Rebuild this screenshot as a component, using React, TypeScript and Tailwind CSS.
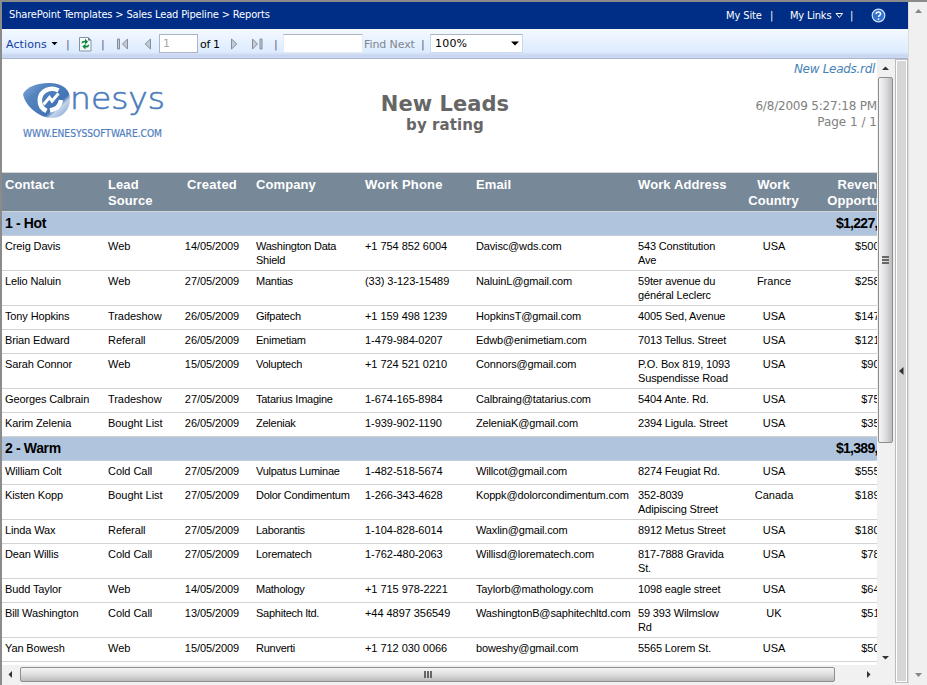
import React from 'react';

interface Lead {
  contact: string;
  source: string;
  created: string;
  company: string[];
  phone: string;
  email: string;
  address: string[];
  country: string;
  revenue: string;
}

interface LeadGroup {
  title: string;
  total: string;
  leads: Lead[];
}

const groups: LeadGroup[] = [
  {
    title: '1 - Hot',
    total: '$1,227,000',
    leads: [
      { contact: 'Creig Davis', source: 'Web', created: '14/05/2009', company: ['Washington Data', 'Shield'], phone: '+1 754 852 6004', email: 'Davisc@wds.com', address: ['543 Constitution', 'Ave'], country: 'USA', revenue: '$500,000' },
      { contact: 'Lelio Naluin', source: 'Web', created: '27/05/2009', company: ['Mantias'], phone: '(33) 3-123-15489', email: 'NaluinL@gmail.com', address: ['59ter avenue du', 'général Leclerc'], country: 'France', revenue: '$258,000' },
      { contact: 'Tony Hopkins', source: 'Tradeshow', created: '26/05/2009', company: ['Gifpatech'], phone: '+1 159 498 1239', email: 'HopkinsT@gmail.com', address: ['4005 Sed, Avenue'], country: 'USA', revenue: '$147,000' },
      { contact: 'Brian Edward', source: 'Referall', created: '26/05/2009', company: ['Enimetiam'], phone: '1-479-984-0207', email: 'Edwb@enimetiam.com', address: ['7013 Tellus. Street'], country: 'USA', revenue: '$121,000' },
      { contact: 'Sarah Connor', source: 'Web', created: '15/05/2009', company: ['Voluptech'], phone: '+1 724 521 0210', email: 'Connors@gmail.com', address: ['P.O. Box 819, 1093', 'Suspendisse Road'], country: 'USA', revenue: '$90,000' },
      { contact: 'Georges Calbrain', source: 'Tradeshow', created: '27/05/2009', company: ['Tatarius Imagine'], phone: '1-674-165-8984', email: 'Calbraing@tatarius.com', address: ['5404 Ante. Rd.'], country: 'USA', revenue: '$75,000' },
      { contact: 'Karim Zelenia', source: 'Bought List', created: '26/05/2009', company: ['Zeleniak'], phone: '1-939-902-1190', email: 'ZeleniaK@gmail.com', address: ['2394 Ligula. Street'], country: 'USA', revenue: '$35,000' },
    ],
  },
  {
    title: '2 - Warm',
    total: '$1,389,000',
    leads: [
      { contact: 'William Colt', source: 'Cold Call', created: '27/05/2009', company: ['Vulpatus Luminae'], phone: '1-482-518-5674', email: 'Willcot@gmail.com', address: ['8274 Feugiat Rd.'], country: 'USA', revenue: '$555,000' },
      { contact: 'Kisten Kopp', source: 'Bought List', created: '27/05/2009', company: ['Dolor Condimentum'], phone: '1-266-343-4628', email: 'Koppk@dolorcondimentum.com', address: ['352-8039', 'Adipiscing Street'], country: 'Canada', revenue: '$189,000' },
      { contact: 'Linda Wax', source: 'Referall', created: '27/05/2009', company: ['Laborantis'], phone: '1-104-828-6014', email: 'Waxlin@gmail.com', address: ['8912 Metus Street'], country: 'USA', revenue: '$180,000' },
      { contact: 'Dean Willis', source: 'Cold Call', created: '27/05/2009', company: ['Lorematech'], phone: '1-762-480-2063', email: 'Willisd@lorematech.com', address: ['817-7888 Gravida', 'St.'], country: 'USA', revenue: '$78,000' },
      { contact: 'Budd Taylor', source: 'Web', created: '14/05/2009', company: ['Mathology'], phone: '+1 715 978-2221', email: 'Taylorb@mathology.com', address: ['1098 eagle street'], country: 'USA', revenue: '$64,000' },
      { contact: 'Bill Washington', source: 'Cold Call', created: '13/05/2009', company: ['Saphitech ltd.'], phone: '+44 4897 356549', email: 'WashingtonB@saphitechltd.com', address: ['59 393 Wilmslow', 'Rd'], country: 'UK', revenue: '$51,000' },
      { contact: 'Yan Bowesh', source: 'Web', created: '15/05/2009', company: ['Runverti'], phone: '+1 712 030 0066', email: 'boweshy@gmail.com', address: ['5565 Lorem St.'], country: 'USA', revenue: '$50,000' },
    ],
  },
];

const columns = 'grid grid-cols-[103px_66px_82px_109px_111px_162px_110px_57px_102px] w-[902px]';

function Lines({ lines }: { lines: string[] }) {
  return (
    <>
      {lines.map((line) => (
        <div key={line}>{line}</div>
      ))}
    </>
  );
}

function TopBar() {
  return (
    <header className="flex h-[27px] shrink-0 items-center bg-[#002d86] font-['DejaVu_Sans_Condensed','DejaVu_Sans',sans-serif] text-[11px] text-white">
      <nav className="w-[724px] pl-[7px] tracking-[-0.15px]">SharePoint Templates &gt; Sales Lead Pipeline &gt; Reports</nav>
      <span className="w-[44px] pt-[2px] tracking-[-0.1px]">My Site</span>
      <span className="w-[20px] pt-[1px]">|</span>
      <span className="w-[45px] pt-[2px] tracking-[-0.2px]">My Links</span>
      <svg className="mr-[6px]" width="9" height="8" viewBox="0 0 9 8">
        <path d="M1 1.5h6.6L4.3 5.5z" fill="none" stroke="#fff" />
      </svg>
      <span className="w-[21px] pt-[1px]">|</span>
      <svg width="15" height="15" viewBox="0 0 15 15">
        <circle cx="7.5" cy="7.5" r="6.3" fill="#3272d2" stroke="#d3e3fa" strokeWidth="1.2" />
        <path d="M5.2 6C5.3 3.2 9.8 3.4 9.6 6C9.5 7.2 7.6 7.4 7.5 9" fill="none" stroke="#fff" strokeWidth="1.5" />
        <circle cx="7.5" cy="11.1" r=".95" fill="#fff" />
      </svg>
    </header>
  );
}

function Toolbar() {
  return (
    <div className="flex h-[30px] shrink-0 items-center border-b border-[#a6b7d2] bg-linear-to-b from-[#f4f9ff] from-0% via-[#dcebfe] via-80% to-[#cbd7f0] to-90% font-['DejaVu_Sans',sans-serif] text-[11px] text-black [&>span]:pt-[3px]">
      <span className="w-[49px] pl-1 text-[#123da0] tracking-[0.1px]">Actions</span>
      <svg width="15" height="6" viewBox="0 0 15 6"><path d="M0.5 1h6l-3 3.2z" /></svg>
      <span className="w-[12px] text-[#555f86]">|</span>
      <svg width="15" height="16" viewBox="0 0 15 16">
        <path d="M1.5 1.5h8.500l3 3v10.500H1.500z" fill="#f6fbf8" stroke="#8294ad" />
        <path d="M10 1v3.500h3.500z" fill="#667b99" />
        <path d="M3.500 7.500C3.500 5 5 4.500 7 4.700V2.800l3.200 3L7 8.600V6.600C5.500 6.300 5 7.200 3.500 7.500zM11.200 8.500c0 2.700-2 3.200-3.700 3v1.900l-3.200-3L7.500 7.800v1.800c1.700.2 2.200-.8 3.700-1.100z" fill="#148843" />
      </svg>
      <span className="w-[24px] pl-[8px] text-[#555f86]">|</span>
      <svg width="12" height="12" viewBox="0 0 12 12" className="mr-[15px]">
        <path d="M.5 1h2v10h-2zM10.500 1v10L5.500 6z" fill="#c5cbd5" stroke="#858d99" />
      </svg>
      <svg width="8" height="12" viewBox="0 0 8 12" className="mr-[7px]">
        <path d="M6.500 1v10L1.200 6z" fill="#c5cbd5" stroke="#858d99" />
      </svg>
      <div className="mr-[2px] flex h-[19px] w-[39px] items-center border border-[#abb5c5] bg-white pl-[3px] pt-[2px] text-[#a7a7a7]">1</div>
      <span className="w-[30px] whitespace-nowrap tracking-[-0.35px]">of 1</span>
      <svg width="8" height="12" viewBox="0 0 8 12" className="mr-[13px]">
        <path d="M1.500 1v10L6.800 6z" fill="#c5cbd5" stroke="#858d99" />
      </svg>
      <svg width="12" height="12" viewBox="0 0 12 12">
        <path d="M1.500 1v10l5-5zM9 1h2v10H9z" fill="#c5cbd5" stroke="#858d99" />
      </svg>
      <span className="w-[20px] pl-[11px] text-[#555f86]">|</span>
      <div className="h-[19px] w-[80px] border border-[#e4ebf5] border-t-[#aeb5c0] bg-white" />
      <span className="w-[58px] whitespace-nowrap pl-[1px] text-[#808590] tracking-[-0.1px]">Find Next</span>
      <span className="w-[9px] text-[#555f86]">|</span>
      <div className="flex h-[19px] w-[93px] items-center justify-between border border-[#cbd9ec] border-t-[#aeb5c0] bg-white pl-1 pr-[3px]">
        <span className="pt-[2px] tracking-[0.2px]">100%</span>
        <svg width="8" height="5" viewBox="0 0 8 5"><path d="M0 0.500h8L4 4.500z" /></svg>
      </div>
    </div>
  );
}

function Logo() {
  return (
    <svg width="146" height="78" viewBox="22 68 146 78">
      <defs>
        <linearGradient id="eye" x1="0" x2="1" y1="0.1" y2="0.9">
          <stop offset="0" stopColor="#7fa6d4" />
          <stop offset=".25" stopColor="#5585c0" />
          <stop offset=".7" stopColor="#4274b5" />
          <stop offset=".78" stopColor="#c3d5ea" />
          <stop offset="1" stopColor="#7fa3cf" />
        </linearGradient>
      </defs>
      <path d="M23 94C27 86 39 82.500 51 83C63 83.500 70 90 70 99C70 109 63 118 52 118C39 118 25 106 23 94Z" fill="url(#eye)" />
      <path d="M58.500 90.500C50 86 40.500 91 39.800 99.500C39.500 105 42.500 109 46.500 111" fill="none" stroke="#fff" strokeWidth="4.500" />
      <path d="M43.500 104.500L49.500 97.500L52 101L58.500 93.500" fill="none" stroke="#fff" strokeWidth="3" />
      <path d="M61 100C60 106 56 109.500 50 110.500" fill="none" stroke="#fff" strokeWidth="4.500" />
      <text x="70" y="109" textLength="95" lengthAdjust="spacingAndGlyphs" fill="#4b7dbb" stroke="#4b7dbb" strokeWidth=".6" className="font-['DejaVu_Sans',sans-serif] text-[31px] font-extralight">nesys</text>
      <text x="23" y="137" textLength="139" lengthAdjust="spacingAndGlyphs" fill="#4f7ec0" stroke="#4f7ec0" strokeWidth=".2" className="font-['DejaVu_Sans_Condensed','DejaVu_Sans',sans-serif] text-[10.5px]">WWW.ENESYSSOFTWARE.COM</text>
    </svg>
  );
}

function ReportHeader() {
  return (
    <div className="flex h-[113px] w-[876px] shrink-0 justify-between font-['DejaVu_Sans',sans-serif]">
      <div className="w-[300px] pl-5 pt-[9px]">
        <Logo />
      </div>
      <div className="w-[286px] pt-[32px] text-center font-bold text-[#666]">
        <div className="text-[21px] leading-[26px] tracking-[0.05px]">New Leads</div>
        <div className="text-[15px] leading-[17px] tracking-[0.1px]">by rating</div>
      </div>
      <div className="w-[290px] pr-[1px] text-right text-[#808080]">
        <div className="h-[39px] pr-[2px] pt-[2px] text-[12px] leading-4 tracking-[-0.3px] italic text-[#4682b4]">New Leads.rdl</div>
        <div className="text-[12px] leading-4 tracking-[-0.2px]">6/8/2009 5:27:18 PM</div>
        <div className="text-[12px] leading-4">Page 1 / 1</div>
      </div>
    </div>
  );
}

function LeadRow({ lead }: { lead: Lead }) {
  return (
    <div className={`${columns} min-h-[24px] border-b border-[#d3d3d3] py-[3px] text-[11px] leading-[14px] text-black *:pl-[3px] *:whitespace-nowrap`}>
      <div className="tracking-[-0.13px]">{lead.contact}</div>
      <div className="tracking-[-0.05px]">{lead.source}</div>
      <div className="pr-[3px] text-center tracking-[-0.08px]">{lead.created}</div>
      <div className="tracking-[-0.25px]"><Lines lines={lead.company} /></div>
      <div className="tracking-[-0.05px]">{lead.phone}</div>
      <div className="tracking-[-0.15px]">{lead.email}</div>
      <div className="tracking-[-0.15px]"><Lines lines={lead.address} /></div>
      <div className="pr-[2px] text-center">{lead.country}</div>
      <div className="pr-[3px] text-right">{lead.revenue}</div>
    </div>
  );
}

function LeadsTable() {
  return (
    <div className="font-['Liberation_Sans',sans-serif]">
      <div className={`${columns} h-[40px] border-t border-b border-[#d3d3d3] bg-[#778899] pt-[4px] text-[13px] font-bold leading-4 tracking-[0.1px] text-white *:pl-[3px] *:whitespace-nowrap`}>
        <div>Contact</div>
        <div><Lines lines={['Lead', 'Source']} /></div>
        <div className="pr-[3px] text-center tracking-[0.25px]">Created</div>
        <div>Company</div>
        <div className="tracking-[0.2px]">Work Phone</div>
        <div>Email</div>
        <div>Work Address</div>
        <div className="pr-[3px] text-center"><Lines lines={['Work', 'Country']} /></div>
        <div className="w-[123px] text-center"><Lines lines={['Revenue', 'Opportunity']} /></div>
      </div>
      {groups.map((group) => (
        <section key={group.title}>
          <div className="flex h-[24px] w-[902px] justify-between border-b border-[#c5cedb] bg-[#b0c4de] pl-[3px] text-[14px] font-bold leading-[23px] tracking-[-0.35px] text-black">
            <span>{group.title}</span>
            <span className="pr-[5px] tracking-[-0.7px]">{group.total}</span>
          </div>
          {group.leads.map((lead) => (
            <LeadRow key={lead.email} lead={lead} />
          ))}
        </section>
      ))}
    </div>
  );
}

function VerticalScrollbar() {
  return (
    <div className="flex w-[17px] shrink-0 flex-col items-center bg-[#f1f1f1]">
      <svg width="7" height="18" viewBox="0 0 7 18"><path d="M0 11h7L3.500 7.500z" fill="#333" /></svg>
      <div className="flex h-[366px] w-[15px] flex-col items-center justify-center gap-px rounded-[2px] border border-[#8e8e8e] bg-linear-to-r from-[#f5f5f5] via-[#dedede] to-[#b9bbc0]">
        <i className="h-[2px] w-[7px] bg-[#666]" />
        <i className="h-[2px] w-[7px] bg-[#666]" />
        <i className="h-[2px] w-[7px] bg-[#666]" />
      </div>
      <svg className="mt-auto" width="7" height="18" viewBox="0 0 7 18"><path d="M0 9h7L3.500 12.500z" fill="#333" /></svg>
    </div>
  );
}

function HorizontalScrollbar() {
  return (
    <div className="flex h-[19px] w-[892px] shrink-0 items-start bg-[#f1f1f1] pt-[2px]">
      <svg className="mt-[4px]" width="18" height="7" viewBox="0 0 18 7"><path d="M10 0v7L6.500 3.500z" fill="#333" /></svg>
      <div className="flex h-[15px] w-[815px] items-center justify-center gap-px rounded-[2px] border border-[#8e8e8e] bg-linear-to-b from-[#f5f5f5] via-[#dedede] to-[#bbb]">
        <i className="h-[7px] w-[2px] bg-[#666]" />
        <i className="h-[7px] w-[2px] bg-[#666]" />
        <i className="h-[7px] w-[2px] bg-[#666]" />
      </div>
      <svg className="mt-[4px] ml-auto mr-[17px]" width="18" height="7" viewBox="0 0 18 7"><path d="M8 0v7l3.500-3.500z" fill="#333" /></svg>
    </div>
  );
}

export default function App() {
  return (
    <div className="flex h-[685px] w-[927px] overflow-hidden border-t-2 border-l-2 border-[#8b8b8b] bg-[#f0f0f0]">
      <div className="flex w-[906px] shrink-0 flex-col">
        <TopBar />
        <Toolbar />
        <div className="flex min-h-0 flex-1">
          <div className="flex w-[892px] shrink-0 flex-col">
            <div className="flex h-[606px] shrink-0">
              <div className="flex w-[875px] shrink-0 flex-col overflow-hidden bg-white">
                <ReportHeader />
                <LeadsTable />
              </div>
              <VerticalScrollbar />
            </div>
            <HorizontalScrollbar />
          </div>
          {/* Collapsed parameters pane */}
          <div className="mb-[2px] ml-[1px] flex w-[13px] items-center border-2 border-white bg-[#d6d6d6] outline outline-[#bbb] -outline-offset-1">
            <svg width="8" height="8" viewBox="0 0 8 8"><path d="M6.500 0v8L2 4z" fill="#333" /></svg>
          </div>
        </div>
      </div>
      <div className="flex flex-1 flex-col items-center justify-between border-l border-[#ddd] pt-[7px] pb-[8px]">
        <svg width="7" height="4" viewBox="0 0 7 4"><path d="M0 4h7L3.500 0z" fill="#888" /></svg>
        <svg width="7" height="4" viewBox="0 0 7 4"><path d="M0 0h7L3.500 4z" fill="#888" /></svg>
      </div>
    </div>
  );
}
